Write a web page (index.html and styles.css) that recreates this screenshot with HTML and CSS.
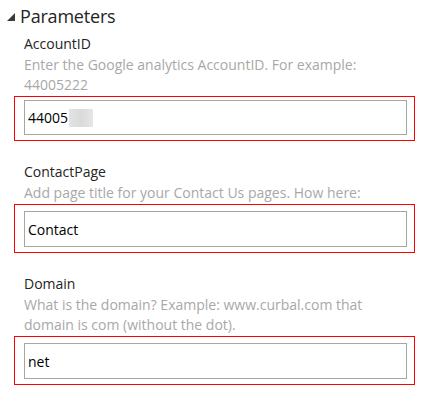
FILE: index.html
```html
<!DOCTYPE html>
<html lang="en">
<head>
    <meta charset="UTF-8">
    <title>Parameters</title>
    <link rel="stylesheet" href="styles.css">
</head>
<body>
<div class="panel">
    <!-- Header -->
    <div class="panel__header">
        <svg class="panel__caret" width="8" height="8" viewBox="0 0 8 8">
            <polygon points="8,0 8,8 0,8" fill="#3b3b3b"/>
        </svg>
        <span class="panel__title">Parameters</span>
    </div>

    <!-- AccountID -->
    <div class="field">
        <div class="field__label">AccountID</div>
        <div class="field__desc">Enter the Google analytics AccountID. For example: 44005222</div>
        <div class="field__mark field__mark--tight">
            <div class="input">44005<span class="input__blur"></span></div>
        </div>
    </div>

    <!-- ContactPage -->
    <div class="field">
        <div class="field__label">ContactPage</div>
        <div class="field__desc">Add page title for your Contact Us pages. How here:</div>
        <div class="field__mark">
            <div class="input">Contact</div>
        </div>
    </div>

    <!-- Domain -->
    <div class="field">
        <div class="field__label">Domain</div>
        <div class="field__desc">What is the domain? Example: www.curbal.com that domain is com (without the dot).</div>
        <div class="field__mark">
            <div class="input">net</div>
        </div>
    </div>
</div>
</body>
</html>
```

FILE: styles.css
```css
:root {
    /* COLORS */
    --text: #252423;
    --muted: #a8a8a8;
    --border: #a6a6a6;
    --mark: #ff0000;

    font-family: "Open Sans", "Noto Sans", sans-serif;
}

body {
    margin: 0;
    background-color: #fff;
}

.panel {
    padding: 4px 16px 0 14px;
}

.panel__header {
    display: flex;
    align-items: center;
    height: 24px;
}

.panel__caret {
    margin-left: -7px;
    margin-right: 5px;
    margin-top: 2px;
}

.panel__title {
    color: var(--text);
    font-size: 18px;
    letter-spacing: -0.2px;
    line-height: 24px;
}

.field {
    margin-top: 5px;
}

.field + .field {
    margin-top: 20px;
}

.field__label {
    color: var(--text);
    font-size: 14px;
    line-height: 22px;
    padding-left: 10px;
}

.field__desc {
    color: var(--muted);
    font-size: 14px;
    line-height: 20px;
    padding-left: 10px;
    padding-right: 30px;
}

.field__mark {
    border: 1px solid var(--mark);
    margin-top: 1px;
    padding: 6px 7px 5px 9px;
}

.field__mark--tight {
    padding: 3px 7px 5px 9px;
}

.input {
    border: 1px solid var(--border);
    color: #000;
    display: flex;
    align-items: center;
    font-size: 14px;
    height: 34px;
    padding-left: 3px;
}

.field__mark--tight .input {
    height: 33px;
}

.input__blur {
    display: inline-block;
    width: 24px;
    height: 18px;
    margin-left: 1px;
    background-image: linear-gradient(90deg, #e3e3e3 0%, #dadada 50%, #e6e6e6 100%);
}
```
